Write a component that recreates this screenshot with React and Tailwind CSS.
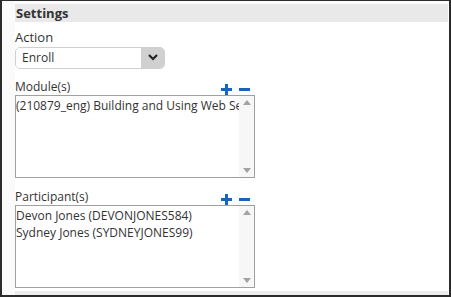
import React from "react";

const PlusMinus = () => (
  <div className="flex items-center gap-[7px] pr-[5px]">
    <svg width="11" height="11" viewBox="0 0 11 11">
      <rect x="0" y="4" width="11" height="3" fill="#1565c0" />
      <rect x="4" y="0" width="3" height="11" fill="#1565c0" />
    </svg>
    <svg width="11" height="11" viewBox="0 0 11 11">
      <rect x="0" y="4" width="11" height="3" fill="#1565c0" />
    </svg>
  </div>
);

const ListBox = ({ items }) => (
  <div className="flex h-[84px] w-[240px] border border-[#a0a0a0] bg-white">
    <div className="flex-1 overflow-hidden pt-[1px] text-[12px] leading-[17px] text-[#333] whitespace-nowrap">
      {items.map((item) => (
        <div key={item}>{item}</div>
      ))}
    </div>
    <div className="flex w-[15px] flex-col items-center justify-between bg-[#f7f7f7] py-[4px]">
      <svg width="8" height="5" viewBox="0 0 8 5">
        <polygon points="4,0 8,5 0,5" fill="#a3a3a3" />
      </svg>
      <svg width="8" height="5" viewBox="0 0 8 5">
        <polygon points="0,0 8,0 4,5" fill="#a3a3a3" />
      </svg>
    </div>
  </div>
);

const App = () => {
  return (
    <div className="flex h-[297px] w-[451px] overflow-hidden border-t border-b-2 border-l-2 border-r-2 border-[#2b2b2b] bg-white font-['Open_Sans','Liberation_Sans',sans-serif]">
      <div className="w-[13px] bg-[#fafafa]" />
      <div className="flex flex-1 flex-col pt-[3px]">
        <div className="h-[18px] bg-[#e9e9e9] pl-[1px] text-[13px] font-bold leading-[18px] text-[#333]">
          Settings
        </div>

        <div className="mt-[6px] text-[13px] leading-[18px] text-[#333]">Action</div>
        <div className="mt-[1px] flex h-[22px] w-[150px] overflow-hidden rounded-[5px] border border-[#cfcfcf]">
          <div className="flex-1 bg-white pl-[6px] text-[12px] leading-[20px] text-[#333]">Enroll</div>
          <div className="flex w-[23px] items-center justify-center bg-[#d0d0d0]">
            <svg width="10" height="7" viewBox="0 0 10 7">
              <polyline points="1,1 5,5 9,1" fill="none" stroke="#222" strokeWidth="2.2" />
            </svg>
          </div>
        </div>

        <div className="mt-[10px] flex w-[240px] items-end justify-between">
          <span className="text-[12px] leading-[16px] text-[#333]">Module(s)</span>
          <PlusMinus />
        </div>
        <ListBox items={["(210879_eng) Building and Using Web Services"]} />

        <div className="mt-[11px] flex w-[240px] items-end justify-between">
          <span className="text-[12px] leading-[16px] text-[#333]">Participant(s)</span>
          <PlusMinus />
        </div>
        <ListBox items={["Devon Jones (DEVONJONES584)", "Sydney Jones (SYDNEYJONES99)"]} />

        <div className="mt-[3px] h-[4px] bg-[#ececec]" />
      </div>
      <div className="w-px" />
    </div>
  );
};

export default App;
